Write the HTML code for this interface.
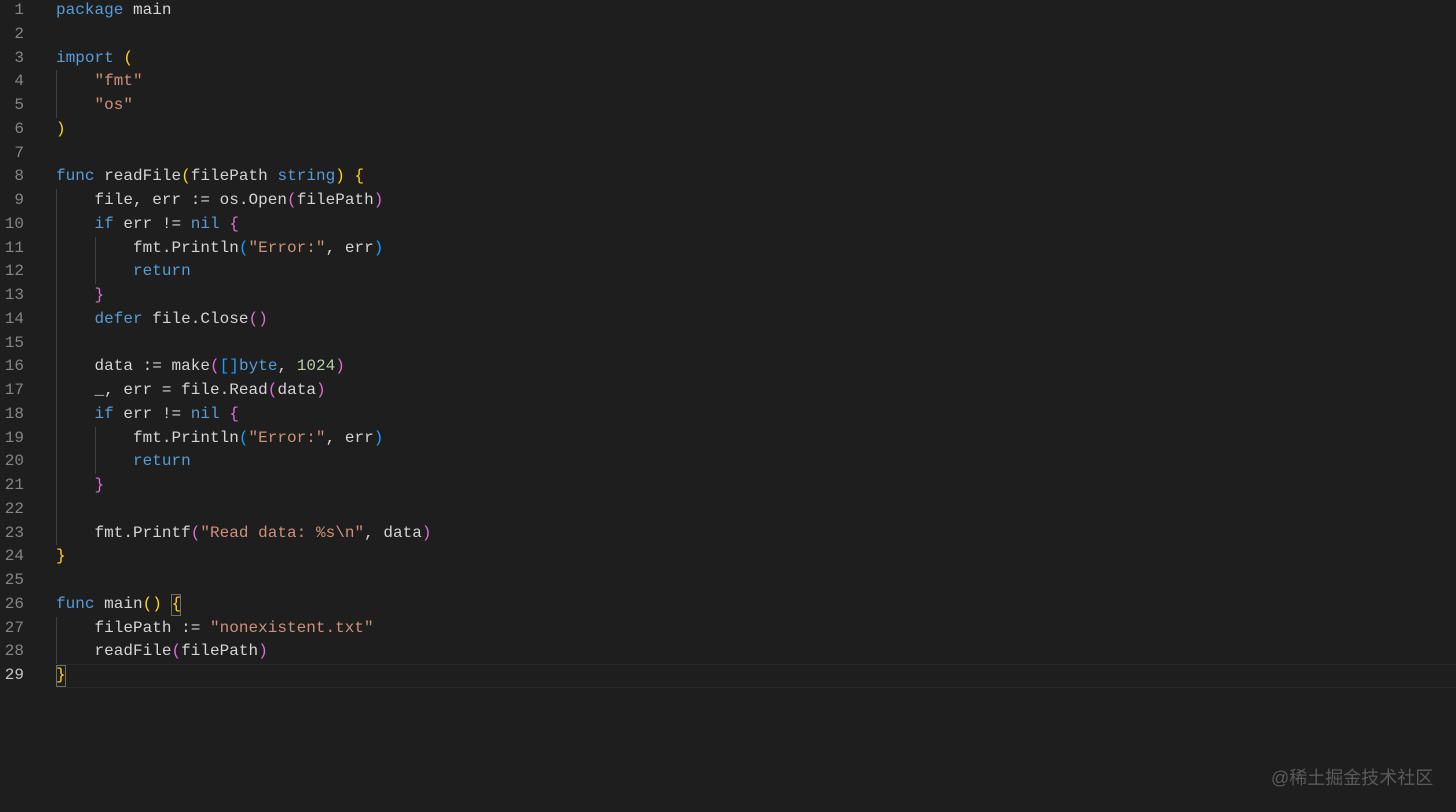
<!DOCTYPE html>
<html>
<head>
<meta charset="utf-8">
<style>
html,body{margin:0;padding:0;background:#1e1e1e;width:1456px;height:812px;overflow:hidden}
#e{position:relative;width:1456px;height:812px;font:16px/24px "Liberation Mono",monospace;color:#d4d4d4;white-space:pre;background:#1e1e1e}
.l,.n{position:absolute;height:24px;filter:blur(.3px)}
.l{left:56px;letter-spacing:.025px}
.n{left:0;width:24px;text-align:right;color:#858585}
.k{color:#569cd6}.s{color:#ce9178}.g{color:#ffd700}.p{color:#da70d6}.b{color:#179fff}.m{color:#b5cea8}
.i{position:absolute;width:1px;background:#404040}
.box{position:absolute;box-sizing:border-box;border:1px solid #6f6f5f}
#cur{position:absolute;left:57px;right:0;top:664px;height:24px;box-sizing:border-box;border-top:1px solid #282828;border-bottom:1px solid #282828}
#wm{position:absolute;left:1271px;top:766px;font:18px/24px "Liberation Sans","Noto Sans CJK SC",sans-serif;color:#5a5a5a;filter:blur(.3px)}
</style>
</head>
<body>
<div id="e">
<div id="cur"></div>
<div class="i" style="left:56px;top:70px;height:48px"></div>
<div class="i" style="left:56px;top:189px;height:356px"></div>
<div class="i" style="left:95px;top:237px;height:47px"></div>
<div class="i" style="left:95px;top:427px;height:47px"></div>
<div class="i" style="left:56px;top:617px;height:47px"></div>
<div class="box" style="left:171px;top:594px;width:10px;height:22px"></div>
<div class="box" style="left:56px;top:665px;width:10px;height:22px"></div>

<div class="n" style="top:-2px">1</div><div class="l" style="top:-2px"><span class="k">package</span> main</div>
<div class="n" style="top:22px">2</div>
<div class="n" style="top:46px">3</div><div class="l" style="top:46px"><span class="k">import</span> <span class="g">(</span></div>
<div class="n" style="top:69px">4</div><div class="l" style="top:69px">    <span class="s">"fmt"</span></div>
<div class="n" style="top:93px">5</div><div class="l" style="top:93px">    <span class="s">"os"</span></div>
<div class="n" style="top:117px">6</div><div class="l" style="top:117px"><span class="g">)</span></div>
<div class="n" style="top:141px">7</div>
<div class="n" style="top:164px">8</div><div class="l" style="top:164px"><span class="k">func</span> readFile<span class="g">(</span>filePath <span class="k">string</span><span class="g">)</span> <span class="g">{</span></div>
<div class="n" style="top:188px">9</div><div class="l" style="top:188px">    file, err := os.Open<span class="p">(</span>filePath<span class="p">)</span></div>
<div class="n" style="top:212px">10</div><div class="l" style="top:212px">    <span class="k">if</span> err != <span class="k">nil</span> <span class="p">{</span></div>
<div class="n" style="top:236px">11</div><div class="l" style="top:236px">        fmt.Println<span class="b">(</span><span class="s">"Error:"</span>, err<span class="b">)</span></div>
<div class="n" style="top:259px">12</div><div class="l" style="top:259px">        <span class="k">return</span></div>
<div class="n" style="top:283px">13</div><div class="l" style="top:283px">    <span class="p">}</span></div>
<div class="n" style="top:307px">14</div><div class="l" style="top:307px">    <span class="k">defer</span> file.Close<span class="p">()</span></div>
<div class="n" style="top:331px">15</div>
<div class="n" style="top:354px">16</div><div class="l" style="top:354px">    data := make<span class="p">(</span><span class="b">[]</span><span class="k">byte</span>, <span class="m">1024</span><span class="p">)</span></div>
<div class="n" style="top:378px">17</div><div class="l" style="top:378px">    _, err = file.Read<span class="p">(</span>data<span class="p">)</span></div>
<div class="n" style="top:402px">18</div><div class="l" style="top:402px">    <span class="k">if</span> err != <span class="k">nil</span> <span class="p">{</span></div>
<div class="n" style="top:426px">19</div><div class="l" style="top:426px">        fmt.Println<span class="b">(</span><span class="s">"Error:"</span>, err<span class="b">)</span></div>
<div class="n" style="top:449px">20</div><div class="l" style="top:449px">        <span class="k">return</span></div>
<div class="n" style="top:473px">21</div><div class="l" style="top:473px">    <span class="p">}</span></div>
<div class="n" style="top:497px">22</div>
<div class="n" style="top:521px">23</div><div class="l" style="top:521px">    fmt.Printf<span class="p">(</span><span class="s">"Read data: %s\n"</span>, data<span class="p">)</span></div>
<div class="n" style="top:544px">24</div><div class="l" style="top:544px"><span class="g">}</span></div>
<div class="n" style="top:568px">25</div>
<div class="n" style="top:592px">26</div><div class="l" style="top:592px"><span class="k">func</span> main<span class="g">()</span> <span class="g">{</span></div>
<div class="n" style="top:616px">27</div><div class="l" style="top:616px">    filePath := <span class="s">"nonexistent.txt"</span></div>
<div class="n" style="top:639px">28</div><div class="l" style="top:639px">    readFile<span class="p">(</span>filePath<span class="p">)</span></div>
<div class="n" style="top:663px;color:#c6c6c6">29</div><div class="l" style="top:663px"><span class="g">}</span></div>

<div id="wm">@稀土掘金技术社区</div>
</div>
</body>
</html>
